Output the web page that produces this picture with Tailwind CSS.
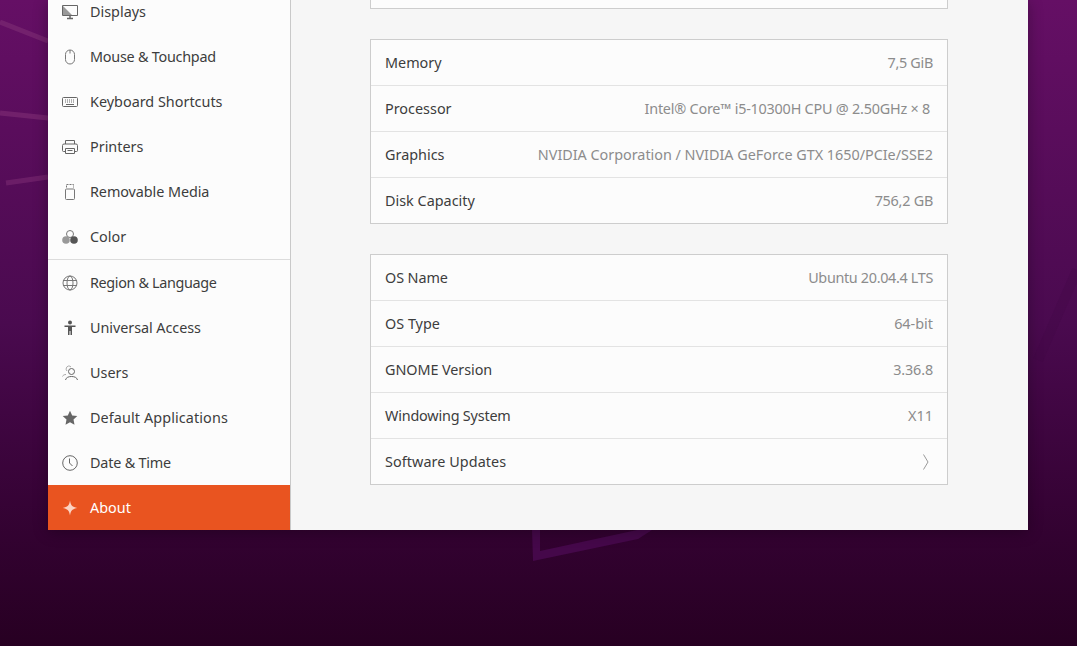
<!DOCTYPE html>
<html lang="en">
<head>
    <meta charset="UTF-8">
    <title>Settings - About</title>
    <script src="https://cdn.jsdelivr.net/npm/@tailwindcss/browser@4"></script>
</head>
<body class="font-['Noto_Sans',sans-serif] text-[14.4px] text-[#3d3d3d]">
<div class="relative w-[1077px] h-[646px] overflow-hidden bg-gradient-to-b from-[#650f65] via-[#4a0a4f] to-[#270022]">
    <!-- Wallpaper streaks -->
    <svg class="absolute inset-0" width="1077" height="646" fill="none">
        <path d="M0 22L48 41" stroke="#7a2a72" stroke-width="5" opacity=".7"/>
        <path d="M0 113L48 118" stroke="#7a2a72" stroke-width="5" opacity=".7"/>
        <path d="M6 183L48 177" stroke="#7a2a72" stroke-width="5" opacity=".6"/>
        <path d="M532 530L533 561L638 539L652 530H637L540 551V530z" fill="#45084a"/>
        <path d="M1077 270L1038 360" stroke="#3f0844" stroke-width="10" opacity=".25"/>
    </svg>

    <!-- Settings window -->
    <div class="absolute left-12 top-0 w-[980px] h-[530px] flex overflow-hidden bg-[#f6f6f6] shadow-[0_2px_14px_rgba(0,0,0,0.3)]">
        <aside class="w-[243px] shrink-0 h-full flex flex-col justify-end bg-[#fcfcfc] border-r border-[#c9c9c9]">
            <div class="h-[45px] shrink-0 flex items-center pl-[14px] gap-[12px]">
                <svg class="w-4 h-4 shrink-0" viewBox="0 0 16 16" fill="none" stroke="#666"><path d="M.5 1.500h15v10H.5z"/><path d="M1 2l9 9H1z" fill="#999" stroke="none"/><path d="M5 14.500h6M8 12v2" stroke-width="1.500"/></svg>
                <span>Displays</span>
            </div>
            <div class="h-[45px] shrink-0 flex items-center pl-[14px] gap-[12px]">
                <svg class="w-4 h-4 shrink-0" viewBox="0 0 16 16" fill="none" stroke="#777"><rect x="3.500" y="1" width="9" height="14" rx="4.500"/><path d="M8 1v3.500"/></svg>
                <span class="tracking-[-0.25px]">Mouse &amp; Touchpad</span>
            </div>
            <div class="h-[45px] shrink-0 flex items-center pl-[14px] gap-[12px]">
                <svg class="w-4 h-4 shrink-0" viewBox="0 0 16 16" fill="none" stroke="#666"><rect x=".5" y="3.500" width="15" height="9" rx="1"/><path d="M3 6h10M3 8h10" stroke-dasharray="1 1"/><path d="M4 10.500h8"/></svg>
                <span>Keyboard Shortcuts</span>
            </div>
            <div class="h-[45px] shrink-0 flex items-center pl-[14px] gap-[12px]">
                <svg class="w-4 h-4 shrink-0" viewBox="0 0 16 16" fill="none" stroke="#666"><path d="M3.500 5V1.500h9V5"/><path d="M3 12.500H1.500a1 1 0 0 1-1-1V6.500a1.500 1.500 0 0 1 1.500-1.500h12a1.500 1.500 0 0 1 1.500 1.500v5a1 1 0 0 1-1 1H13"/><path d="M3.500 9.500h9v5h-9zM5.500 11.500h5"/></svg>
                <span>Printers</span>
            </div>
            <div class="h-[45px] shrink-0 flex items-center pl-[14px] gap-[12px]">
                <svg class="w-4 h-4 shrink-0" viewBox="0 0 16 16" fill="none" stroke="#777"><rect x="3.500" y="5" width="9" height="10.500" rx="1"/><path d="M4.500 3.500V.5h7v3" stroke-dasharray="2 1"/></svg>
                <span class="tracking-[-0.08px]">Removable Media</span>
            </div>
            <div class="h-[45px] shrink-0 flex items-center pl-[14px] gap-[12px]">
                <svg class="w-4 h-4 shrink-0" viewBox="0 0 16 16"><circle cx="8" cy="5" r="3.500" fill="none" stroke="#777"/><circle cx="4" cy="11" r="3.800" fill="#999"/><circle cx="12" cy="11" r="3.800" fill="#555"/></svg>
                <span>Color</span>
            </div>
            <div class="h-px shrink-0 bg-[#dcdcdc]"></div>
            <div class="h-[45px] shrink-0 flex items-center pl-[14px] gap-[12px]">
                <svg class="w-4 h-4 shrink-0" viewBox="0 0 16 16" fill="none" stroke="#777"><circle cx="8" cy="8" r="7"/><ellipse cx="8" cy="8" rx="3" ry="7"/><path d="M1 5.500h14M1 10.500h14"/></svg>
                <span class="tracking-[-0.35px]">Region &amp; Language</span>
            </div>
            <div class="h-[45px] shrink-0 flex items-center pl-[14px] gap-[12px]">
                <svg class="w-4 h-4 shrink-0" viewBox="0 0 16 16" fill="#555"><circle cx="8" cy="2.500" r="2"/><path d="M2.500 5.500h11v1.500H10v8H8.500v-4h-1v4H6V7H2.500z"/></svg>
                <span class="tracking-[-0.06px]">Universal Access</span>
            </div>
            <div class="h-[45px] shrink-0 flex items-center pl-[14px] gap-[12px]">
                <svg class="w-4 h-4 shrink-0" viewBox="0 0 16 16" fill="none" stroke="#666"><circle cx="9.500" cy="6.500" r="3"/><path d="M3.500 15c.5-2.500 3-3.500 6-3.500s5.500 1 6 3.500"/><path d="M5 6a3 3 0 0 1 1.500-5A3 3 0 0 1 9 2M.5 11.500C1 10 2.500 9.500 4 9.500" stroke="#aaa"/></svg>
                <span>Users</span>
            </div>
            <div class="h-[45px] shrink-0 flex items-center pl-[14px] gap-[12px]">
                <svg class="w-4 h-4 shrink-0" viewBox="0 0 16 16" fill="#666"><path d="M8 .8l2.200 4.700 5.100.6-3.800 3.500 1 5.100L8 12.200l-4.500 2.500 1-5.100L.7 6.100l5.100-.6z"/></svg>
                <span class="tracking-[0.1px]">Default Applications</span>
            </div>
            <div class="h-[45px] shrink-0 flex items-center pl-[14px] gap-[12px]">
                <svg class="w-4 h-4 shrink-0" viewBox="0 0 16 16" fill="none" stroke="#666"><circle cx="8" cy="8" r="7.300"/><path d="M7.500 3.500V8l3 3"/></svg>
                <span class="tracking-[-0.2px]">Date &amp; Time</span>
            </div>
            <div class="h-[45px] shrink-0 flex items-center pl-[14px] gap-[12px] bg-[#e95420] text-white">
                <svg class="w-4 h-4 shrink-0" viewBox="0 0 16 16" fill="#fbd3c3"><path d="M8 .5c.6 4.600 2.400 6.600 7.300 7.500-4.900.9-6.700 2.900-7.300 7.500-.6-4.600-2.400-6.600-7.300-7.500C5.600 7.100 7.400 5.100 8 .5z"/></svg>
                <span>About</span>
            </div>
        </aside>

        <main class="flex-1 flex flex-col justify-end pl-[79px] pr-[80px] pb-[45px]">
            <div class="h-[10px] shrink-0 bg-[#fcfcfc] border border-t-0 border-[#cdcdcd]"></div>

            <div class="mt-[30px] shrink-0 bg-[#fcfcfc] border border-[#cdcdcd] divide-y divide-[#e3e3e3]">
                <div class="h-[46px] flex items-center justify-between px-[14px]"><span>Memory</span><span class="text-[#8c8c8c] tracking-[-0.3px]">7,5 GiB</span></div>
                <div class="h-[46px] flex items-center justify-between px-[14px]"><span>Processor</span><span class="text-[#8c8c8c] pr-[3px] tracking-[-0.22px]">Intel® Core™ i5-10300H CPU @ 2.50GHz × 8</span></div>
                <div class="h-[46px] flex items-center justify-between px-[14px]"><span>Graphics</span><span class="text-[#8c8c8c] tracking-[-0.02px]">NVIDIA Corporation / NVIDIA GeForce GTX 1650/PCIe/SSE2</span></div>
                <div class="h-[45px] flex items-center justify-between px-[14px]"><span>Disk Capacity</span><span class="text-[#8c8c8c] tracking-[-0.25px]">756,2 GB</span></div>
            </div>

            <div class="mt-[30px] shrink-0 bg-[#fcfcfc] border border-[#cdcdcd] divide-y divide-[#e3e3e3]">
                <div class="h-[46px] flex items-center justify-between px-[14px]"><span class="tracking-[-0.1px]">OS Name</span><span class="text-[#8c8c8c] tracking-[-0.33px]">Ubuntu 20.04.4 LTS</span></div>
                <div class="h-[46px] flex items-center justify-between px-[14px]"><span>OS Type</span><span class="text-[#8c8c8c]">64-bit</span></div>
                <div class="h-[46px] flex items-center justify-between px-[14px]"><span class="tracking-[-0.07px]">GNOME Version</span><span class="text-[#8c8c8c] tracking-[-0.15px]">3.36.8</span></div>
                <div class="h-[46px] flex items-center justify-between px-[14px]"><span class="tracking-[-0.19px]">Windowing System</span><span class="text-[#8c8c8c]">X11</span></div>
                <div class="h-[45px] flex items-center justify-between px-[14px]">
                    <span class="tracking-[0.07px]">Software Updates</span>
                    <svg class="w-4 h-4 mr-[-1px]" viewBox="0 0 16 16" fill="none" stroke="#999"><path d="M5.500 .5L10 8l-4.500 7.500"/></svg>
                </div>
            </div>
        </main>
    </div>
</div>
</body>
</html>
